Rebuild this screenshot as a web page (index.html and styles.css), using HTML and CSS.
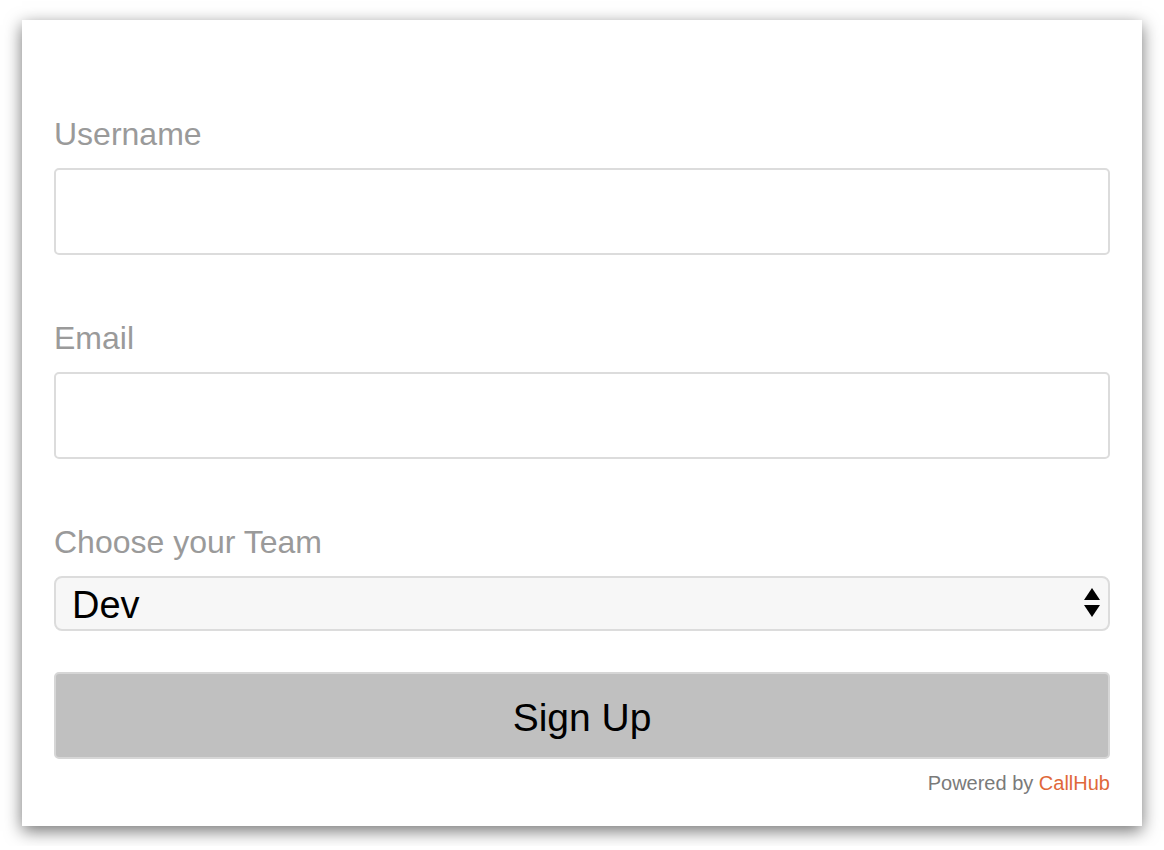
FILE: index.html
```html
<!DOCTYPE html>
<html lang="en">
<head>
<meta charset="utf-8">
<title>Sign Up</title>
<link rel="stylesheet" href="styles.css">
</head>
<body>
<div class="card">
  <form class="form">
    <label class="label" for="username">Username</label>
    <input class="field" id="username" type="text">
    <label class="label label-next" for="email">Email</label>
    <input class="field" id="email" type="email">
    <label class="label label-next" for="team">Choose your Team</label>
    <div class="select-wrap">
      <select class="select" id="team">
        <option>Dev</option>
      </select>
      <svg class="arrows" width="18" height="34" viewBox="0 0 18 34" aria-hidden="true">
        <polygon points="9,2 17,14 1,14" fill="#000"/>
        <polygon points="1,19 17,19 9,31" fill="#000"/>
      </svg>
    </div>
    <button class="button" type="button">Sign Up</button>
    <div class="powered">Powered by <span class="brand">CallHub</span></div>
  </form>
</div>
</body>
</html>
```
FILE: styles.css
```css
html, body {
  margin: 0;
  padding: 0;
  background: #ffffff;
}
body {
  padding: 20px 22px;
  font-family: "Liberation Sans", Arial, Helvetica, sans-serif;
}
.card {
  background: #ffffff;
  box-shadow: 0 5px 16px rgba(0, 0, 0, 0.55);
  padding: 96px 32px 31px 32px;
}
.form {
  display: flex;
  flex-direction: column;
}
.label {
  font-size: 32px;
  line-height: 36px;
  color: #9a9a9a;
  margin-bottom: 16px;
}
.label-next {
  margin-top: 65px;
}
.field {
  box-sizing: border-box;
  height: 87px;
  width: 100%;
  margin: 0;
  border: 2px solid #dcdcdc;
  border-radius: 5px;
  background: #ffffff;
  font-family: inherit;
  font-size: 30px;
  padding: 0 16px;
  outline: none;
}
.select-wrap {
  position: relative;
  height: 55px;
}
.select {
  box-sizing: border-box;
  -webkit-appearance: none;
  appearance: none;
  width: 100%;
  height: 55px;
  margin: 0;
  border: 2px solid #dcdcdc;
  border-radius: 8px;
  background: #f7f7f7;
  color: #000;
  font-family: inherit;
  font-size: 38px;
  padding: 3px 16px 0 16px;
  outline: none;
}
.arrows {
  position: absolute;
  right: 9px;
  top: 10px;
}
.button {
  box-sizing: border-box;
  margin-top: 41px;
  height: 87px;
  width: 100%;
  border: 2px solid #d6d6d6;
  border-radius: 5px;
  background: #c0c0c0;
  color: #000;
  font-family: inherit;
  font-size: 39px;
  padding: 5px 0 0 0;
}
.powered {
  margin-top: 13px;
  text-align: right;
  font-size: 20px;
  line-height: 23px;
  color: #7a7a7a;
}
.brand {
  color: #e0683a;
}
```
